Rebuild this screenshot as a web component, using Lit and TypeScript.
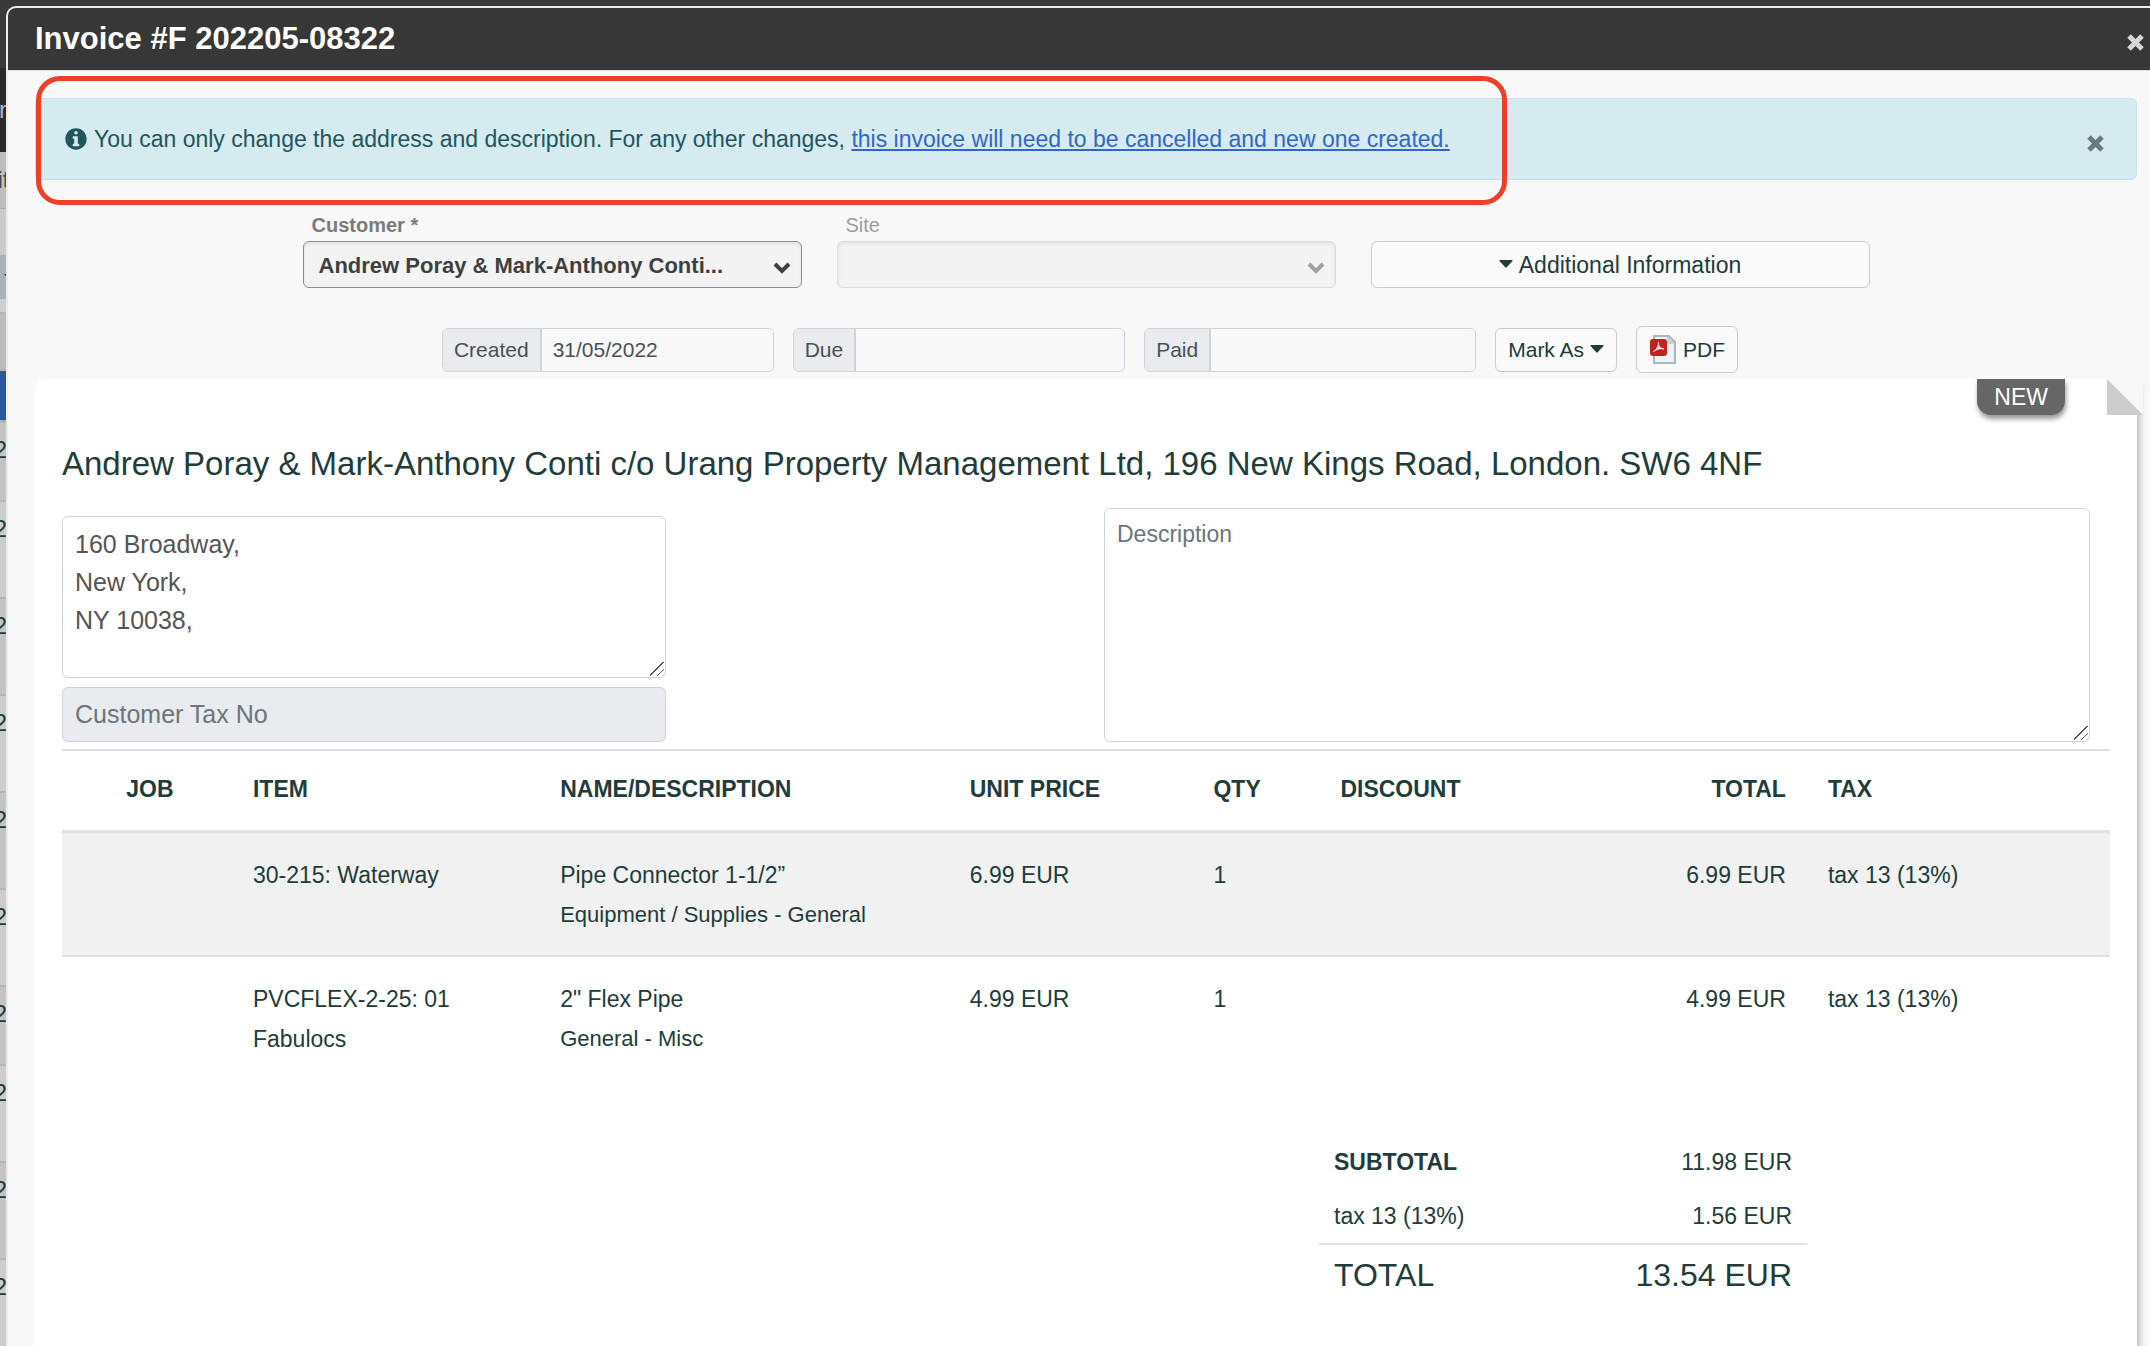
import { LitElement, html, css, svg } from "lit";
import { customElement } from "lit/decorators.js";

interface Line {
  item: string;
  name: string;
  category: string;
  price: string;
  qty: string;
  discount: string;
  total: string;
  tax: string;
}

const LINES: Line[] = [
  {
    item: "30-215: Waterway",
    name: "Pipe Connector 1-1/2”",
    category: "Equipment / Supplies - General",
    price: "6.99 EUR",
    qty: "1",
    discount: "",
    total: "6.99 EUR",
    tax: "tax 13 (13%)",
  },
  {
    item: "PVCFLEX-2-25: 01 Fabulocs",
    name: '2" Flex Pipe',
    category: "General - Misc",
    price: "4.99 EUR",
    qty: "1",
    discount: "",
    total: "4.99 EUR",
    tax: "tax 13 (13%)",
  },
];

const cross = svg`<path d="M3 3 L16 16 M16 3 L3 16" fill="none" stroke="currentColor" stroke-width="5" />`;

/* The sliver of the invoice list that stays visible beside the dialog. */
@customElement("list-backdrop")
export class ListBackdrop extends LitElement {
  static styles = css`
    :host {
      display: block;
      overflow: hidden;
      background: #cccccc;
      color: #1c3b39;
      font-size: 24px;
    }
    .band {
      display: flex;
      align-items: center;
      box-sizing: border-box;
    }
    .clip {
      display: flex;
      justify-content: flex-end;
      width: 7px;
    }
    .top { height: 68px; background: #393939; }
    .nav { height: 84px; background: #2b2b2b; color: #b4b4b4; }
    .tabs { height: 57px; background: #bebebe; color: #444444; border-bottom: 1px solid #a9adb0; }
    .tabs .clip { justify-content: center; }
    .gap { height: 46px; background: #cacaca; }
    .filter { height: 44px; padding-left: 4px; background: #acb1b5; }
    .space { height: 15px; background: #cecece; border-bottom: 2px solid #b4b8bb; }
    .head { height: 57px; background: #bcbcbc; border-bottom: 2px solid #aeb2b5; }
    .active { height: 49px; background: #2a559f; }
    .rule { height: 3px; background: #aeb2b5; }
    .row {
      height: 97px;
      align-items: flex-start;
      padding-top: 7px;
      border-bottom: 2px solid #b3b7ba;
    }
    .row.short { height: 79px; }
    .row.odd { background: #c3c3c3; }
  `;

  render() {
    const rows = [true, false, false, false, false, false, true, false, false, false];
    return html`
      <div class="band top"></div>
      <div class="band nav"><span class="clip">r</span></div>
      <div class="band tabs"><span class="clip">it</span></div>
      <div class="band gap"></div>
      <div class="band filter">
        <svg width="10" height="6" viewBox="0 0 10 6"><path d="M0 0 H10 L5 6 Z" fill="#2a3a3a" /></svg>
      </div>
      <div class="band space"></div>
      <div class="band head"></div>
      <div class="band active"></div>
      <div class="band rule"></div>
      ${rows.map(
        (short, i) => html`<div class="band row ${short ? "short" : ""} ${i % 2 ? "" : "odd"}">
          <span class="clip">2</span>
        </div>`,
      )}
    `;
  }
}

@customElement("app-root")
export class AppRoot extends LitElement {
  static styles = css`
    :host {
      display: grid;
      grid-template-columns: minmax(0, 1fr);
      grid-template-rows: minmax(0, 1fr);
      height: 100vh;
      overflow: hidden;
      font-family: "Liberation Sans", Arial, Helvetica, sans-serif;
      font-size: 23px;
      line-height: 40px;
      color: #213c3b;
    }
    list-backdrop,
    .dialog { grid-area: 1 / 1; min-height: 0; }

    button, input, select, textarea {
      font: inherit;
      color: inherit;
      box-sizing: border-box;
      margin: 0;
    }

    .dialog {
      display: flex;
      flex-direction: column;
      margin: 6px 0 0 6px;
      border: 2px solid #ececec;
      border-width: 2px 0 0 2px;
      border-radius: 10px 0 0 0;
      background: #f8f8f8;
      overflow: hidden;
    }
    .bar {
      display: flex;
      align-items: center;
      justify-content: space-between;
      height: 62px;
      flex: none;
      padding: 0 5px 0 27px;
      background: #373737;
      border-bottom: 1px solid #dee2e6;
      color: #ffffff;
    }
    .bar h1 { margin: 0; font-size: 31px; line-height: 40px; }
    .close {
      display: flex;
      padding: 0;
      border: 0;
      background: none;
      color: #6b7b7d;
    }
    .bar .close { color: #d7d7d7; padding-top: 6px; }

    .body {
      display: flex;
      flex-direction: column;
      flex: 1;
      min-height: 0;
      padding: 27px 13px 0 27px;
    }

    .alert {
      position: relative;
      display: flex;
      align-items: center;
      justify-content: space-between;
      box-sizing: border-box;
      height: 82px;
      flex: none;
      padding: 0 31px 0 29px;
      border: 1px solid #c3e4ea;
      border-radius: 6px;
      background: #d6ebf0;
      color: #225560;
    }
    .alert p { display: flex; align-items: center; gap: 7px; margin: 0; }
    .alert a { color: #2f67c9; text-decoration-thickness: 2px; text-underline-offset: 2px; }
    .alert .close { padding-top: 8px; }
    .callout {
      position: absolute;
      top: -23px;
      left: 0;
      right: 629px;
      bottom: -26px;
      border: 5px solid #ee4026;
      border-radius: 24px;
      pointer-events: none;
    }

    .pickers {
      display: grid;
      grid-template-columns: repeat(3, 499px);
      justify-content: center;
      align-items: end;
      column-gap: 35px;
      padding-top: 31px;
    }
    .field { display: flex; flex-direction: column; }
    .field label { padding: 0 0 2px 9px; font-size: 20px; line-height: 28px; color: #9d9d9d; }
    .field.required label { font-weight: bold; color: #7b7b7b; }
    .picker { display: grid; align-items: center; color: #a0a0a0; }
    .picker.on { color: #3f3f3f; }
    .picker select {
      grid-area: 1 / 1;
      appearance: none;
      width: 100%;
      height: 47px;
      padding: 2px 52px 0 15px;
      border: 1px solid #dcdcdc;
      border-radius: 6px;
      background: #f3f3f3;
      box-shadow: inset 0 2px 3px #e2e2e2;
      font-size: 22px;
      font-weight: bold;
      opacity: 1;
      text-overflow: ellipsis;
    }
    .picker.on select { border-color: #8c8c8c; }
    .picker svg { grid-area: 1 / 1; justify-self: end; margin: 8px 11px 0 0; pointer-events: none; }

    .btn {
      display: flex;
      align-items: center;
      justify-content: center;
      gap: 6px;
      height: 47px;
      padding: 0 12px;
      border: 1px solid #cccccc;
      border-radius: 6px;
      background: #fafafa;
      white-space: nowrap;
    }

    .dates {
      display: flex;
      justify-content: center;
      align-items: center;
      gap: 19px;
      padding: 38px 0 6px 8px;
      font-size: 21px;
    }
    .group {
      display: flex;
      box-sizing: border-box;
      height: 44px;
      border: 1px solid #ced4da;
      border-radius: 6px;
      overflow: hidden;
      color: #495057;
    }
    .group label {
      padding: 0 11px;
      line-height: 42px;
      background: #e9ebef;
      border-right: 2px solid #ced4da;
    }
    .group input { width: 231px; padding: 0 11px; border: 0; background: #f8f8f8; }
    .group.wide input { width: 268px; }
    .group.mid input { width: 264px; }
    .btn.small { height: 44px; }

    .sheet {
      position: relative;
      flex: 1;
      min-height: 0;
      padding: 0 27px;
      background: #ffffff;
      border-radius: 10px 0 0 0;
      box-shadow: 3px 6px 6px #bdbdbd;
      clip-path: inset(0 -13px 0 0);
    }
    .fold { position: absolute; top: 0; right: -6px; display: block; }
    .badge {
      position: absolute;
      top: 0;
      right: 72px;
      padding: 0 17px;
      line-height: 36px;
      color: #ffffff;
      background: #666666;
      border-radius: 0 0 14px 14px;
      box-shadow: 1px 4px 5px #999999;
    }
    h2 {
      margin: 0;
      padding-top: 65px;
      font-size: 33px;
      font-weight: normal;
      line-height: 40px;
    }
    .details {
      display: flex;
      justify-content: space-between;
      align-items: flex-end;
      padding: 24px 20px 7px 0;
    }
    .left { display: flex; flex-direction: column; gap: 9px; width: 604px; font-size: 25px; }
    .details textarea, .details input {
      display: block;
      width: 100%;
      border: 1px solid #ced4da;
      border-radius: 6px;
      padding: 8px 12px;
      background: #ffffff;
      color: #555555;
    }
    .details textarea::-webkit-resizer {
      background: linear-gradient(
          135deg,
          transparent 46%,
          #555555 46% 52%,
          transparent 52% 72%,
          #555555 72% 78%,
          transparent 78%
        )
        0 0 / 14px 14px no-repeat;
    }
    .details ::placeholder { color: #6c757d; opacity: 1; }
    .left textarea { height: 162px; line-height: 38px; }
    .details .left input { height: 55px; background: #e9ebef; }
    .right { width: 986px; }
    .right textarea { height: 234px; line-height: 34px; }

    table { border-collapse: collapse; }
    .lines { width: 100%; table-layout: fixed; border-top: 2px solid #dee2e6; }
    .lines th, .lines td { padding: 22px 21px 20px; text-align: left; vertical-align: top; }
    .lines th { height: 54px; border-bottom: 3px solid #dee2e6; padding-top: 25px; padding-bottom: 0; line-height: 26px; }
    .lines tbody tr { border-bottom: 2px solid #dee2e6; }
    .lines tbody tr:last-child { border-bottom: 0; }
    .lines tbody tr:nth-child(odd) { background: #f1f1f1; }
    .lines .job { padding-left: 27px; text-align: center; }
    .lines .num { text-align: right; }
    .lines small { display: block; font-size: 22px; }
    .c-job { width: 8.3%; }
    .c-item { width: 15%; }
    .c-name { width: 20%; }
    .c-price { width: 11.9%; }
    .c-qty { width: 6.2%; }
    .c-tax { width: 14.8%; }

    .sums { width: 488px; margin: 56px 303px 0 auto; }
    .sums th, .sums td { padding: 7px 15px; text-align: right; font-weight: normal; }
    .sums th { text-align: left; }
    .sums .sub th { font-weight: bold; }
    .sums .grand { border-top: 2px solid #dee2e6; font-size: 32px; }
    .sums .grand th, .sums .grand td { padding-top: 10px; }
  `;

  private crossIcon() {
    return html`<svg width="19" height="19" viewBox="0 0 19 19" aria-hidden="true">${cross}</svg>`;
  }

  private caret() {
    return html`<svg width="14" height="9" viewBox="0 0 14 9" aria-hidden="true">
      <path d="M1 0 H13 Q14 0 13.500 1 L8 7 Q7 8 6 7 L0.500 1 Q0 0 1 0 Z" fill="currentColor" />
    </svg>`;
  }

  private chevron() {
    return html`<svg width="18" height="14" viewBox="0 0 18 14" aria-hidden="true">
      <path d="M2 2 L9 9 L16 2" fill="none" stroke="currentColor" stroke-width="4" />
    </svg>`;
  }

  private pdfIcon() {
    return html`<svg width="28" height="30" viewBox="0 0 28 30" aria-hidden="true">
      <path d="M5 1 H20 L26 7 V28 H5 Z" fill="#eef3f5" stroke="#a9b8bc" stroke-width="2" />
      <path d="M19 1 V8 H26 Z" fill="#cdd9dd" stroke="#a9b8bc" stroke-width="1" />
      <rect x="1" y="4" width="17" height="17" rx="3" fill="#c3231d" />
      <path
        d="M4.5 16.500 C8 14.500 10 9.500 9.500 7 C8.500 10 12 14 15 14 C11.500 13 7 14.500 4.500 16.500 Z"
        fill="#f6d9d6"
        stroke="#f6d9d6"
        stroke-width="1"
      />
    </svg>`;
  }

  private bar() {
    return html`<header class="bar">
      <h1>Invoice #F 202205-08322</h1>
      <button class="close" type="button" aria-label="Close">${this.crossIcon()}</button>
    </header>`;
  }

  private alert() {
    return html`<div class="alert" role="alert">
      <p>
        <svg width="22" height="22" viewBox="0 0 512 512" aria-hidden="true">
          <path
            fill="currentColor"
            d="M256 8C119 8 8 119 8 256s111 248 248 248 248-111 248-248S393 8 256 8zm0 60a42 42 0 1 1 0 84 42 42 0 0 1 0-84zm76 344a12 12 0 0 1-12 12h-128a12 12 0 0 1-12-12v-34a12 12 0 0 1 12-12h22v-114h-22a12 12 0 0 1-12-12v-34a12 12 0 0 1 12-12h94a12 12 0 0 1 12 12v160h22a12 12 0 0 1 12 12v34z"
          />
        </svg>
        <span
          >You can only change the address and description. For any other changes,
          <a href="#cancel">this invoice will need to be cancelled and new one created.</a></span
        >
      </p>
      <button class="close" type="button" aria-label="Dismiss">${this.crossIcon()}</button>
      <div class="callout"></div>
    </div>`;
  }

  private pickers() {
    return html`<div class="pickers">
      <div class="field required">
        <label for="customer">Customer *</label>
        <div class="picker on">
          <select id="customer">
            <option>Andrew Poray &amp; Mark-Anthony Conti...</option>
          </select>
          ${this.chevron()}
        </div>
      </div>
      <div class="field">
        <label for="site">Site</label>
        <div class="picker">
          <select id="site" disabled></select>
          ${this.chevron()}
        </div>
      </div>
      <button class="btn" type="button">${this.caret()}Additional Information</button>
    </div>`;
  }

  private dates() {
    return html`<div class="dates">
      <div class="group">
        <label for="created">Created</label><input id="created" type="text" value="31/05/2022" />
      </div>
      <div class="group wide"><label for="due">Due</label><input id="due" type="text" /></div>
      <div class="group mid"><label for="paid">Paid</label><input id="paid" type="text" /></div>
      <button class="btn small" type="button">Mark As${this.caret()}</button>
      <button class="btn" type="button">${this.pdfIcon()}PDF</button>
    </div>`;
  }

  private lines() {
    return html`<table class="lines">
      <colgroup>
        <col class="c-job" /><col class="c-item" /><col class="c-name" /><col class="c-price" />
        <col class="c-qty" /><col /><col /><col class="c-tax" />
      </colgroup>
      <thead>
        <tr>
          <th class="job">JOB</th>
          <th>ITEM</th>
          <th>NAME/DESCRIPTION</th>
          <th>UNIT PRICE</th>
          <th>QTY</th>
          <th>DISCOUNT</th>
          <th class="num">TOTAL</th>
          <th>TAX</th>
        </tr>
      </thead>
      <tbody>
        ${LINES.map(
          (l) => html`<tr>
            <td class="job"></td>
            <td>${l.item}</td>
            <td>${l.name}<small>${l.category}</small></td>
            <td>${l.price}</td>
            <td>${l.qty}</td>
            <td>${l.discount}</td>
            <td class="num">${l.total}</td>
            <td>${l.tax}</td>
          </tr>`,
        )}
      </tbody>
    </table>`;
  }

  private sums() {
    return html`<table class="sums">
      <tbody>
        <tr class="sub"><th scope="row">SUBTOTAL</th><td>11.98 EUR</td></tr>
        <tr><th scope="row">tax 13 (13%)</th><td>1.56 EUR</td></tr>
        <tr class="grand"><th scope="row">TOTAL</th><td>13.54 EUR</td></tr>
      </tbody>
    </table>`;
  }

  render() {
    return html`
      <list-backdrop aria-hidden="true"></list-backdrop>
      <section class="dialog" role="dialog" aria-label="Invoice">
        ${this.bar()}
        <div class="body">
          ${this.alert()} ${this.pickers()} ${this.dates()}
          <article class="sheet">
            <svg class="fold" width="36" height="36" viewBox="0 0 36 36" aria-hidden="true">
              <path d="M0 0 H36 V36 Z" fill="#f8f8f8" />
              <path d="M0 0 L36 36 H0 Z" fill="#cccccc" />
            </svg>
            <span class="badge">NEW</span>
            <h2>
              Andrew Poray &amp; Mark-Anthony Conti c/o Urang Property Management Ltd, 196 New Kings
              Road, London. SW6 4NF
            </h2>
            <div class="details">
              <div class="left">
                <textarea aria-label="Address" .value=${"160 Broadway,\nNew York,\nNY 10038,"}></textarea>
                <input type="text" aria-label="Customer Tax No" placeholder="Customer Tax No" disabled />
              </div>
              <div class="right">
                <textarea aria-label="Description" placeholder="Description"></textarea>
              </div>
            </div>
            ${this.lines()} ${this.sums()}
          </article>
        </div>
      </section>
    `;
  }
}
